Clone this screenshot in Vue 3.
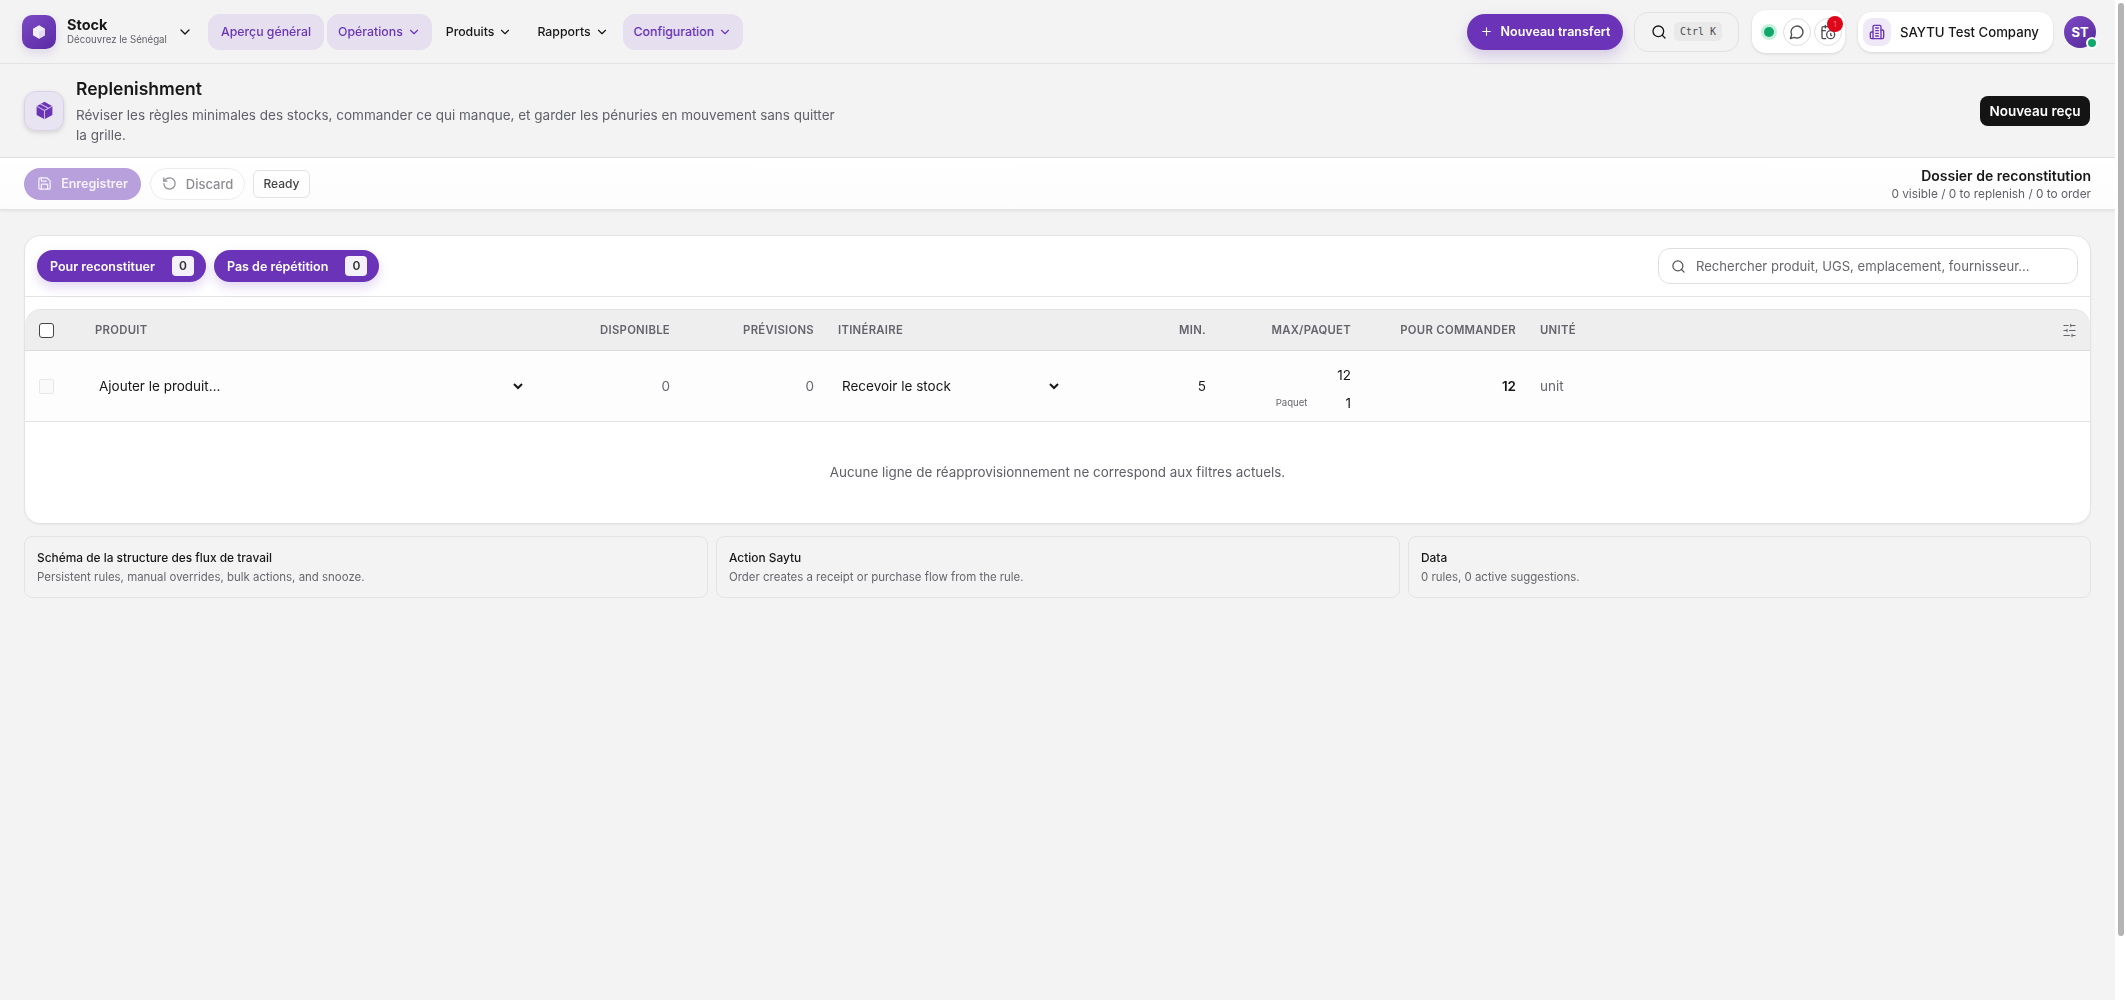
<template>
  <div class="page">
    <!-- top bar -->
    <header class="topbar">
      <div class="brand">
        <span class="brand-logo">
          <svg viewBox="0 0 24 24" width="16" height="16">
            <path d="M12 2l9 5v10l-9 5-9-5V7z" fill="#fff" opacity=".92" />
            <path d="M12 12l9-5v10l-9 5z" fill="#e3d9f2" />
          </svg>
        </span>
        <span class="brand-text">
          <strong>Stock</strong>
          <small>Découvrez le Sénégal</small>
        </span>
        <svg class="brand-caret" viewBox="0 0 24 24" width="16" height="16"><path d="m6 9 6 6 6-6" /></svg>
      </div>

      <nav class="nav">
        <a v-for="item in navItems" :key="item.label" class="nav-item" :class="{ active: item.active, plain: !item.caret }">
          {{ item.label }}
          <svg v-if="item.caret" viewBox="0 0 24 24" width="14" height="14"><path d="m6 9 6 6 6-6" /></svg>
        </a>
      </nav>

      <div class="top-actions">
        <button class="transfer-btn">
          <svg viewBox="0 0 24 24" width="13" height="13"><path d="M5 12h14M12 5v14" /></svg>
          Nouveau transfert
        </button>
        <div class="cmd-search">
          <svg viewBox="0 0 24 24" width="16" height="16"><circle cx="11" cy="11" r="8" /><path d="m21 21-4.3-4.3" /></svg>
          <kbd>Ctrl K</kbd>
        </div>
        <div class="status-box">
          <span class="status-dot"></span>
          <span class="round-btn">
            <svg viewBox="0 0 24 24" width="16" height="16"><path d="M7.9 20A9 9 0 1 0 4 16.1L2 22Z" /></svg>
          </span>
          <span class="round-btn">
            <svg viewBox="0 0 24 24" width="16" height="16">
              <path d="M21 7.5V6a2 2 0 0 0-2-2H5a2 2 0 0 0-2 2v14a2 2 0 0 0 2 2h3.5" />
              <path d="M16 2v4M8 2v4M3 10h5M17.5 17.5 16 16.3V14" />
              <circle cx="16" cy="16" r="6" />
            </svg>
            <span class="red-badge">1</span>
          </span>
        </div>
        <div class="company">
          <span class="company-icon">
            <svg viewBox="0 0 24 24" width="16" height="16">
              <path d="M6 22V4a2 2 0 0 1 2-2h8a2 2 0 0 1 2 2v18Z" />
              <path d="M6 12H4a2 2 0 0 0-2 2v6a2 2 0 0 0 2 2h2M18 9h2a2 2 0 0 1 2 2v9a2 2 0 0 1-2 2h-2M10 6h4M10 10h4M10 14h4M10 18h4" />
            </svg>
          </span>
          SAYTU Test Company
        </div>
        <div class="avatar">ST<span class="online"></span></div>
      </div>
    </header>

    <!-- page title -->
    <section class="page-head">
      <span class="head-icon">
        <svg viewBox="0 0 24 24" width="21" height="21">
          <path d="M12 2l9 5v10l-9 5-9-5V7z" fill="#6b34b8" />
          <path d="M3 7l9 5 9-5M12 12v10M7.5 4.5l9 5" stroke="#cdbce6" stroke-width="1.2" fill="none" />
        </svg>
      </span>
      <div class="head-text">
        <h1>Replenishment</h1>
        <p>Réviser les règles minimales des stocks, commander ce qui manque, et garder les pénuries en mouvement sans quitter la grille.</p>
      </div>
      <button class="receipt-btn">Nouveau reçu</button>
    </section>

    <!-- save bar -->
    <section class="savebar">
      <button class="save-btn">
        <svg viewBox="0 0 24 24" width="15" height="15">
          <path d="M15.2 3a2 2 0 0 1 1.4.6l3.8 3.8a2 2 0 0 1 .6 1.4V19a2 2 0 0 1-2 2H5a2 2 0 0 1-2-2V5a2 2 0 0 1 2-2z" />
          <path d="M17 21v-7a1 1 0 0 0-1-1H8a1 1 0 0 0-1 1v7M7 3v4a1 1 0 0 0 1 1h7" />
        </svg>
        Enregistrer
      </button>
      <button class="discard-btn">
        <svg viewBox="0 0 24 24" width="15" height="15">
          <path d="M3 12a9 9 0 1 0 9-9 9.75 9.75 0 0 0-6.74 2.74L3 8" /><path d="M3 3v5h5" />
        </svg>
        Discard
      </button>
      <span class="ready">Ready</span>
      <div class="save-info">
        <strong>Dossier de reconstitution</strong>
        <span>0 visible / 0 to replenish / 0 to order</span>
      </div>
    </section>

    <main class="content">
      <div class="panel">
        <div class="filters">
          <button v-for="f in filters" :key="f" class="filter-pill">{{ f }}<b>0</b></button>
          <label class="grid-search">
            <svg viewBox="0 0 24 24" width="15" height="15"><circle cx="11" cy="11" r="8" /><path d="m21 21-4.3-4.3" /></svg>
            <input type="text" placeholder="Rechercher produit, UGS, emplacement, fournisseur…" />
          </label>
        </div>

        <div class="grid-head grid-cols">
          <span class="cell"><span class="check"></span></span>
          <span class="cell">PRODUIT</span>
          <span class="cell right">DISPONIBLE</span>
          <span class="cell right">PRÉVISIONS</span>
          <span class="cell">ITINÉRAIRE</span>
          <span class="cell right">MIN.</span>
          <span class="cell right">MAX/PAQUET</span>
          <span class="cell right">POUR COMMANDER</span>
          <span class="cell">UNITÉ</span>
          <span class="cell tune">
            <svg viewBox="0 0 24 24" width="15" height="15"><path d="M21 4h-7M10 4H3M21 12h-9M8 12H3M21 20h-5M12 20H3M14 2v4M8 10v4M16 18v4" /></svg>
          </span>
        </div>

        <div class="grid-row grid-cols">
          <span class="cell"><span class="check off"></span></span>
          <span class="cell">
            <select class="sel product-sel"><option>Ajouter le produit…</option></select>
          </span>
          <span class="cell right muted">0</span>
          <span class="cell right muted">0</span>
          <span class="cell">
            <select class="sel route-sel"><option>Recevoir le stock</option></select>
          </span>
          <span class="cell right">5</span>
          <span class="cell maxpack">
            <span>12</span>
            <span class="pack"><small>Paquet</small>1</span>
          </span>
          <span class="cell right strong">12</span>
          <span class="cell muted">unit</span>
        </div>

        <p class="empty">Aucune ligne de réapprovisionnement ne correspond aux filtres actuels.</p>
      </div>

      <div class="notes">
        <div v-for="n in notes" :key="n.title" class="note">
          <strong>{{ n.title }}</strong>
          <span>{{ n.text }}</span>
        </div>
      </div>
    </main>

    <div class="scrollbar"><span class="thumb"></span></div>
  </div>
</template>

<script setup>
const navItems = [
  { label: 'Aperçu général', active: true },
  { label: 'Opérations', active: true, caret: true },
  { label: 'Produits', caret: true },
  { label: 'Rapports', caret: true },
  { label: 'Configuration', active: true, caret: true },
]

const filters = ['Pour reconstituer', 'Pas de répétition']

const notes = [
  { title: 'Schéma de la structure des flux de travail', text: 'Persistent rules, manual overrides, bulk actions, and snooze.' },
  { title: 'Action Saytu', text: 'Order creates a receipt or purchase flow from the rule.' },
  { title: 'Data', text: '0 rules, 0 active suggestions.' },
]
</script>

<style>
html, body { margin: 0; background: #f3f3f3; overflow: hidden; }
</style>

<style scoped>
.page {
  position: relative;
  height: 1000px;
  padding-right: 11px;
  color: #171717;
  font-family: Inter, "Noto Sans", sans-serif;
  box-sizing: border-box;
  will-change: opacity;
}
svg { fill: none; stroke: currentColor; stroke-width: 2; stroke-linecap: round; stroke-linejoin: round; flex-shrink: 0; }
button { font-family: inherit; border: 0; cursor: pointer; }

/* top bar */
.topbar {
  height: 64px;
  box-sizing: border-box;
  border-bottom: 1px solid #e2e2e4;
  display: flex;
  align-items: center;
  padding: 0 19px 0 22px;
}
.brand { display: flex; align-items: center; width: 186px; }
.brand-logo {
  width: 34px;
  height: 34px;
  border-radius: 10px;
  background: linear-gradient(145deg, #7d4ac6, #5a2aa3);
  box-shadow: 0 4px 10px rgba(107, 52, 184, .15);
  display: flex;
  align-items: center;
  justify-content: center;
  margin-right: 11px;
}
.brand-logo svg { stroke: none; }
.brand-text { display: flex; flex-direction: column; line-height: 1; width: 103px; margin-right: 7px; }
.brand-text strong { font-size: 14.5px; font-weight: 700; margin-bottom: 3px; }
.brand-text small { font-size: 9.7px; color: #5f5f68; white-space: nowrap; }
.nav { display: flex; gap: 3px; }
.nav-item {
  height: 36px;
  padding: 0 11px;
  border-radius: 12px;
  display: flex;
  align-items: center;
  gap: 4px;
  font-size: 12.3px;
  font-weight: 500;
}
.nav-item.plain { padding: 0 13px; }
.nav-item.active { background: #e5dff0; color: #6b34b8; }
.top-actions { margin-left: auto; display: flex; align-items: center; }
.transfer-btn {
  height: 36px;
  width: 156px;
  border-radius: 18px;
  background: #6b34b8;
  color: #fff;
  font-size: 12.5px;
  font-weight: 600;
  display: flex;
  align-items: center;
  justify-content: center;
  gap: 8px;
  box-shadow: 0 6px 14px rgba(107, 52, 184, .22);
}
.cmd-search {
  margin-left: 11px;
  width: 105px;
  height: 40px;
  box-sizing: border-box;
  border: 1px solid #e1e1e3;
  border-radius: 14px;
  display: flex;
  align-items: center;
  gap: 7px;
  padding-left: 16px;
}
.cmd-search kbd {
  font-family: "DejaVu Sans Mono", monospace;
  font-size: 10px;
  background: #e9e9ea;
  color: #4b4b52;
  border-radius: 5px;
  padding: 4px 6px;
}
.status-box {
  margin-left: 13px;
  width: 93px;
  height: 43px;
  box-sizing: border-box;
  background: #fff;
  border-radius: 14px;
  box-shadow: 0 1px 3px rgba(0, 0, 0, .12);
  display: flex;
  align-items: center;
  padding-left: 11px;
  gap: 3px;
}
.status-dot {
  width: 10px;
  height: 10px;
  background: #10a86b;
  border-radius: 50%;
  box-shadow: 0 0 0 3px #c4f0dc;
  margin: 0 6px 0 1px;
}
.round-btn {
  position: relative;
  width: 28px;
  height: 28px;
  box-sizing: border-box;
  border: 1px solid #dedee0;
  border-radius: 50%;
  display: flex;
  align-items: center;
  justify-content: center;
  color: #4b4b52;
}
.red-badge {
  position: absolute;
  top: -3px;
  right: -2px;
  width: 16px;
  height: 16px;
  border-radius: 50%;
  background: #e0061a;
  color: #e77;
  font-size: 8px;
  line-height: 16px;
  text-align: center;
}
.company {
  margin-left: 13px;
  width: 195px;
  height: 40px;
  box-sizing: border-box;
  background: #fff;
  border-radius: 14px;
  box-shadow: 0 1px 3px rgba(0, 0, 0, .12);
  display: flex;
  align-items: center;
  gap: 9px;
  padding-left: 5px;
  font-size: 13.2px;
  font-weight: 500;
  white-space: nowrap;
}
.company-icon {
  width: 28px;
  height: 28px;
  border-radius: 9px;
  background: #eee8f7;
  color: #6b34b8;
  display: flex;
  align-items: center;
  justify-content: center;
}
.avatar {
  position: relative;
  margin-left: 11px;
  width: 32px;
  height: 32px;
  border-radius: 50%;
  background: linear-gradient(145deg, #7d4ac6, #552a99);
  color: #fff;
  font-size: 13px;
  font-weight: 700;
  line-height: 32px;
  text-align: center;
}
.online {
  position: absolute;
  right: -2px;
  bottom: -1px;
  width: 12px;
  height: 12px;
  box-sizing: border-box;
  background: #10a86b;
  border: 2px solid #fff;
  border-radius: 50%;
}

/* page head */
.page-head {
  height: 94px;
  box-sizing: border-box;
  border-bottom: 1px solid #e2e2e4;
  display: flex;
  align-items: center;
  padding: 0 25px 0 24px;
}
.head-icon {
  width: 40px;
  height: 40px;
  box-sizing: border-box;
  border-radius: 12px;
  border: 1px solid #d9d2e6;
  background: #e9e4f2;
  box-shadow: 0 2px 5px rgba(0, 0, 0, .12);
  display: flex;
  align-items: center;
  justify-content: center;
  margin-right: 12px;
}
.head-icon svg { stroke: none; }
.head-text { width: 770px; }
.head-text h1 { margin: 0 0 4px; font-size: 17.5px; line-height: 25px; font-weight: 600; }
.head-text p { margin: 0; font-size: 13.5px; line-height: 20px; color: #5f5f68; }
.receipt-btn {
  margin-left: auto;
  height: 30px;
  width: 110px;
  border-radius: 8px;
  background: #141414;
  color: #fff;
  font-size: 13.5px;
  font-weight: 600;
}

/* save bar */
.savebar {
  height: 52px;
  box-sizing: border-box;
  background: linear-gradient(#fff, #fcfcfc);
  border-bottom: 1px solid #e2e2e4;
  box-shadow: 0 1px 3px rgba(0, 0, 0, .08);
  display: flex;
  align-items: center;
  padding: 0 24px;
}
.save-btn {
  height: 32px;
  width: 117px;
  border-radius: 16px;
  background: #b8a0dc;
  color: #f6f2fb;
  font-size: 12.5px;
  font-weight: 600;
  display: flex;
  align-items: center;
  justify-content: center;
  gap: 9px;
}
.discard-btn {
  margin-left: 9px;
  height: 32px;
  width: 95px;
  box-sizing: border-box;
  border: 1px solid #ececee;
  border-radius: 16px;
  background: #fff;
  color: #8d8d94;
  font-size: 13px;
  font-weight: 500;
  display: flex;
  align-items: center;
  justify-content: center;
  gap: 9px;
}
.ready {
  margin-left: 8px;
  height: 28px;
  width: 57px;
  box-sizing: border-box;
  border: 1px solid #e2e2e4;
  border-radius: 6px;
  font-size: 12px;
  font-weight: 500;
  color: #444;
  line-height: 25px;
  text-align: center;
}
.save-info { margin-left: auto; padding-top: 2px; display: flex; flex-direction: column; align-items: flex-end; }
.save-info strong { font-size: 14px; line-height: 18px; font-weight: 600; }
.save-info span { font-size: 11.85px; line-height: 18px; color: #5f5f68; }

/* content */
.content { padding: 25px 24px 0; }
.panel {
  background: #fff;
  border: 1px solid #e3e3e5;
  border-radius: 16px;
  height: 289px;
  box-sizing: border-box;
  box-shadow: 0 1px 2px rgba(0, 0, 0, .05);
}
.filters {
  height: 61px;
  box-sizing: border-box;
  border-bottom: 1px solid #e3e3e5;
  display: flex;
  align-items: center;
  gap: 8px;
  padding: 0 12px;
}
.filter-pill {
  height: 32px;
  border-radius: 16px;
  background: #6b34b8;
  color: #fff;
  font-size: 12.5px;
  font-weight: 600;
  display: flex;
  align-items: center;
  gap: 17px;
  padding: 0 12px 0 13px;
  box-shadow: 0 5px 12px rgba(107, 52, 184, .2);
}
.filter-pill b {
  width: 22px;
  height: 20px;
  background: #f4f2f8;
  color: #333;
  border-radius: 4px;
  font-size: 12px;
  font-weight: 600;
  line-height: 20px;
}
.grid-search {
  margin-left: auto;
  width: 420px;
  height: 36px;
  box-sizing: border-box;
  border: 1px solid #dfdfe2;
  border-radius: 12px;
  display: flex;
  align-items: center;
  gap: 8px;
  padding-left: 12px;
  color: #55555c;
}
.grid-search input {
  flex: 1;
  border: 0;
  outline: 0;
  background: transparent;
  font: 400 13.1px Inter, sans-serif;
  color: #333;
}
.grid-search input::placeholder { color: #66666e; opacity: 1; }

.grid-cols {
  display: grid;
  grid-template-columns: 58px 452px 147px 144px 274px 118px 145px 165px 1fr 42px;
}
.grid-head {
  margin-top: 12px;
  height: 42px;
  box-sizing: border-box;
  background: #eeeeef;
  border-top: 1px solid #e3e3e5;
  border-bottom: 1px solid #dcdcde;
  border-radius: 16px 16px 0 0;
  font-size: 11.3px;
  font-weight: 600;
  letter-spacing: .3px;
  color: #63636b;
}
.grid-row {
  height: 71px;
  box-sizing: border-box;
  border-bottom: 1px solid #e3e3e5;
  background: #fdfdfd;
  font-size: 13.5px;
}
.cell { display: flex; align-items: center; padding: 0 12px; white-space: nowrap; min-width: 0; }
.cell.right { justify-content: flex-end; }
.muted { color: #66666e; }
.strong { font-weight: 600; }
.check {
  width: 15px;
  height: 15px;
  box-sizing: border-box;
  margin-left: 2px;
  border: 1.3px solid #444;
  border-radius: 3px;
  background: #fff;
}
.check.off { border: 1px solid #e8e8ea; background: #fafafa; border-radius: 2px; }
.tune { justify-content: center; color: #66666e; padding: 0; }
.tune svg { stroke-width: 1.6; }
.sel {
  flex: none;
  border: 0;
  outline: 0;
  background: transparent;
  font: 400 13.5px Inter, sans-serif;
  color: #171717;
  padding: 0;
}
.product-sel { width: 431px; }
.route-sel { width: 224px; }
.cell.maxpack {
  flex-direction: column;
  align-items: flex-end;
  justify-content: center;
  gap: 10px;
  line-height: 18px;
  padding-top: 6px;
}
.pack { display: flex; align-items: center; gap: 38px; }
.pack small { font-size: 9.6px; color: #66666e; }
.empty {
  margin: 0;
  height: 101px;
  font-size: 13.4px;
  line-height: 101px;
  color: #5f5f68;
  text-align: center;
}

.notes { display: grid; grid-template-columns: 684px 684px 1fr; gap: 8px; margin-top: 12px; }
.note {
  height: 62px;
  box-sizing: border-box;
  border: 1px solid #e3e3e5;
  border-radius: 8px;
  padding: 0 12px;
  display: flex;
  flex-direction: column;
  justify-content: center;
  gap: 3px;
}
.note strong { font-size: 11.9px; line-height: 17px; font-weight: 500; }
.note span { font-size: 11.45px; line-height: 17px; color: #66666e; }

.scrollbar {
  position: absolute;
  top: 0;
  right: 0;
  bottom: 0;
  width: 11px;
  background: #fff;
}
.thumb {
  position: absolute;
  top: 3px;
  left: 3px;
  width: 6px;
  height: 933px;
  border-radius: 3px;
  background: #b4b4b4;
}
</style>
